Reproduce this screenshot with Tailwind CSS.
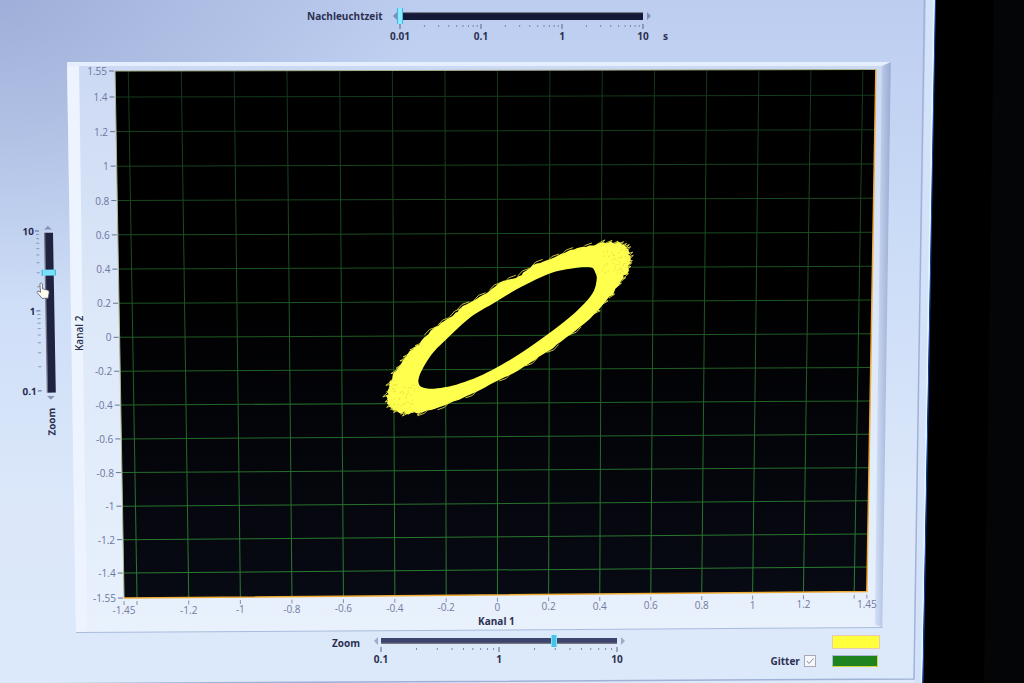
<!DOCTYPE html>
<html lang="de">
<head>
  <meta charset="UTF-8">
  <meta name="viewport" content="width=device-width, initial-scale=1.0">
  <title>XY-Oszilloskop</title>
  <script src="https://cdn.jsdelivr.net/npm/@tailwindcss/browser@4"></script>
</head>
<body class="bg-black font-['Open_Sans',sans-serif] text-[10px] leading-4 text-[#2c3050] overflow-x-hidden">
  <div class="relative isolate min-h-screen">

    <!-- Window frame and monitor edge -->
    <svg class="absolute inset-0 -z-10 size-full" viewBox="0 0 1024 683" preserveAspectRatio="none" aria-hidden="true">
      <defs>
        <linearGradient id="face" x1="0" y1="0" x2="0" y2="1">
          <stop offset="0" stop-color="#bccdf0" />
          <stop offset="0.35" stop-color="#cbdcf7" />
          <stop offset="0.75" stop-color="#dce8fa" />
          <stop offset="1" stop-color="#dce9fa" />
        </linearGradient>
        <radialGradient id="shade" cx="0" cy="0" r="0.45">
          <stop offset="0" stop-color="#8795c4" stop-opacity="0.55" />
          <stop offset="1" stop-color="#8795c4" stop-opacity="0" />
        </radialGradient>
      </defs>
      <rect width="1024" height="683" fill="#000" />
      <path d="M994 0H1024V683H984Z" fill="#040506" />
      <path d="M0 0H935L922 683H0Z" fill="url(#face)" />
      <path d="M0 0H935L922 683H0Z" fill="url(#shade)" />
      <path d="M926 0H935L922 683H915Z" fill="#d3e2f8" />
      <path d="M924.500 0L914 679L0 684" fill="none" stroke="#9fb1d6" stroke-width="1.500" />
      <path d="M934 0L921.500 683" stroke="#e2f6ff" stroke-width="1.500" />
      <path d="M935.500 0L923 683" stroke="#1648b8" stroke-width="1" />
    </svg>

    <div class="w-[87%]">
      <!-- Persistence -->
      <header class="flex h-[60px] items-start gap-2 pt-2 pl-[307px]">
        <label for="persistence" class="w-[78px] font-bold">Nachleuchtzeit</label>
        <div>
          <div class="flex h-4 items-center">
            <svg class="h-2 w-1" viewBox="0 0 4 8" aria-hidden="true"><path d="M4 0V8L0 4Z" fill="#7d8db5" /></svg>
            <input id="persistence" type="range" min="0" max="100" value="0"
              class="h-4 w-[249px] appearance-none bg-transparent bg-linear-to-b from-[#777985] from-10% to-[#151938] to-20% bg-[length:calc(100%-6px)_8px] bg-center bg-no-repeat [&::-webkit-slider-thumb]:h-4 [&::-webkit-slider-thumb]:w-[6px] [&::-webkit-slider-thumb]:appearance-none [&::-webkit-slider-thumb]:border-x [&::-webkit-slider-thumb]:border-[#3fb4e4] [&::-webkit-slider-thumb]:bg-[#8beaff]" />
            <svg class="ml-px h-2 w-1" viewBox="0 0 4 8" aria-hidden="true"><path d="M0 0V8L4 4Z" fill="#7d8db5" /></svg>
          </div>
          <svg class="scale ml-[7px] h-6 w-[243px] overflow-visible" data-labels="0.01,0.1,1,10" data-length="243" viewBox="0 0 243 24"></svg>
        </div>
        <span class="ml-1 pt-5 font-bold">s</span>
      </header>

      <main class="flex">
        <!-- Channel 2 zoom -->
        <aside class="relative w-[66px] shrink-0 -rotate-1 pt-[165px] pl-[18px]">
          <div class="flex">
            <svg class="vscale mt-[6px] h-[160px] w-6 overflow-visible" data-labels="10,1,0.1" data-length="160" viewBox="0 0 24 160"></svg>
            <div class="flex flex-col items-center">
              <svg class="mt-px h-1 w-2" viewBox="0 0 8 4" aria-hidden="true"><path d="M0 4H8L4 0Z" fill="#8a94b4" /></svg>
              <input id="zoomY" type="range" min="0" max="100" value="74.5"
                class="h-[166px] w-[14px] appearance-none bg-transparent bg-linear-to-r from-[#6d7182] from-10% to-[#20233f] to-20% bg-[length:9px_calc(100%-6px)] bg-center bg-no-repeat [direction:rtl] [writing-mode:vertical-lr] [&::-webkit-slider-thumb]:h-[6px] [&::-webkit-slider-thumb]:w-[14px] [&::-webkit-slider-thumb]:appearance-none [&::-webkit-slider-thumb]:border-y [&::-webkit-slider-thumb]:border-[#35a9dd] [&::-webkit-slider-thumb]:bg-[#78e0fb]" />
              <svg class="h-1 w-2" viewBox="0 0 8 4" aria-hidden="true"><path d="M0 0H8L4 4Z" fill="#8a94b4" /></svg>
              <label for="zoomY" class="mt-2 rotate-180 font-bold [writing-mode:vertical-rl]">Zoom</label>
            </div>
          </div>
          <!-- Hand pointer -->
          <svg class="absolute top-[222px] left-[37px] h-[18px] w-[14px]" viewBox="0 0 14 18" aria-hidden="true">
            <path d="M4 2Q5.200 0 6.500 2V7L12 8.500Q13.500 9 13 11.500L12 16.500H6L1 10.500Q1 8.500 3 9.500L4.500 10.500Z" fill="#fffff2" stroke="#555a70" stroke-width="0.800" />
          </svg>
        </aside>

        <svg id="plot" class="min-w-0 flex-1" viewBox="66 60 824 574" role="img" aria-label="Kanal 2 über Kanal 1">
          <defs>
            <linearGradient id="panel" x1="0" y1="0" x2="0" y2="1">
              <stop offset="0" stop-color="#ccd9f3" />
              <stop offset="0.45" stop-color="#dde8f9" />
              <stop offset="1" stop-color="#e8f1fc" />
            </linearGradient>
            <linearGradient id="screen" x1="0" y1="0" x2="0" y2="1">
              <stop offset="0.4" stop-color="#000" />
              <stop offset="1" stop-color="#080a14" />
            </linearGradient>
            <linearGradient id="gridInk" gradientUnits="userSpaceOnUse" x1="0" y1="70" x2="0" y2="598">
              <stop offset="0" stop-color="#12351a" />
              <stop offset="0.5" stop-color="#1d5a22" />
              <stop offset="1" stop-color="#2a7d30" />
            </linearGradient>
            <linearGradient id="bevel" x1="0" y1="0" x2="1" y2="0">
              <stop offset="0" stop-color="#d3e0f6" />
              <stop offset="1" stop-color="#98abd2" />
            </linearGradient>
          </defs>
          <path d="M67 62H890L881.500 627L76 632Z" fill="url(#panel)" />
          <path d="M67 62H79L87 632H76Z" fill="#edf4ff" />
          <path d="M67 62H890L884 66H67Z" fill="#e4eefe" />
          <path d="M881 66L890 62L881.500 627L874 624Z" fill="url(#bevel)" />
          <path d="M76 632L881.500 627" stroke="#a9bcdf" />
          <g id="grid"></g>
          <g id="trace"></g>
          <text x="496" y="624" text-anchor="middle" class="fill-[#2c3050] font-bold">Kanal 1</text>
          <text transform="translate(83 333) rotate(-90)" text-anchor="middle" class="fill-[#2c3050] font-semibold">Kanal 2</text>
        </svg>
      </main>

      <footer class="flex items-start justify-between pl-[332px]">
        <!-- Channel 1 zoom -->
        <div class="flex gap-3">
          <label for="zoomX" class="w-[30px] font-bold">Zoom</label>
          <div>
            <div class="flex h-3 items-center">
              <svg class="h-2 w-1" viewBox="0 0 4 8" aria-hidden="true"><path d="M4 0V8L0 4Z" fill="#9dabc9" /></svg>
              <input id="zoomX" type="range" min="0" max="100" value="73.5" step="0.5"
                class="h-3 w-[242px] appearance-none bg-transparent bg-linear-to-b from-[#3c446e] from-70% to-[#777780] to-90% bg-[length:calc(100%-6px)_6px] bg-center bg-no-repeat [&::-webkit-slider-thumb]:h-3 [&::-webkit-slider-thumb]:w-[6px] [&::-webkit-slider-thumb]:appearance-none [&::-webkit-slider-thumb]:border-x [&::-webkit-slider-thumb]:border-[#7fe0f6] [&::-webkit-slider-thumb]:bg-[#45c4e8]" />
              <svg class="ml-px h-2 w-1" viewBox="0 0 4 8" aria-hidden="true"><path d="M0 0V8L4 4Z" fill="#9dabc9" /></svg>
            </div>
            <svg class="scale ml-[7px] h-6 w-[236px] overflow-visible" data-labels="0.1,1,10" data-length="236" viewBox="0 0 236 24"></svg>
          </div>
        </div>
        <!-- Colours -->
        <div class="grid grid-cols-[auto_48px] items-center gap-x-4 gap-y-1 pr-[11px]">
          <span></span>
          <button type="button" aria-label="Farbe der Spur" class="h-[14px] border border-[#e9c8b4] bg-[#ffff3c]"></button>
          <div class="flex items-center gap-1">
            <label for="gitter" class="font-bold">Gitter</label>
            <input id="gitter" type="checkbox" checked class="peer size-3 appearance-none border border-[#a9aab5] bg-[#f4f7fb]" />
            <svg class="pointer-events-none -ml-4 hidden size-3 peer-checked:block" viewBox="0 0 12 12" aria-hidden="true"><path d="M3 6L5 8.500L9.500 3.500" fill="none" stroke="#8e9098" /></svg>
          </div>
          <button type="button" aria-label="Farbe des Gitters" class="h-3 w-[46px] border border-[#a8bad6] border-r-[#cfd83c] border-b-[#cfd83c] bg-[#1f831f]"></button>
        </div>
      </footer>
    </div>
  </div>

  <script>
    // logarithmic tick offsets from 0 to length
    function logTicks(decades, length) {
      const ticks = [];
      for (let d = 0; d < decades; d++) {
        for (let n = 1; n < 10; n++) {
          ticks.push({ at: (d + Math.log10(n)) / decades * length, major: n === 1 });
        }
      }
      ticks.push({ at: length, major: true });
      return ticks;
    }

    document.querySelectorAll('.scale').forEach(function (svg) {
      const labels = svg.dataset.labels.split(',');
      const length = +svg.dataset.length;
      let out = '';
      logTicks(labels.length - 1, length).forEach(t => {
        out += `<path d="M${t.at} ${t.major ? 0 : 1}V${t.major ? 5 : 3}" stroke="${t.major ? '#5b658c' : '#7c88ad'}"/>`;
      });
      labels.forEach((label, i) => {
        out += `<text x="${i * length / (labels.length - 1)}" y="16" text-anchor="middle" class="fill-[#2c3050] font-bold">${label}</text>`;
      });
      svg.innerHTML = out;
    });

    document.querySelectorAll('.vscale').forEach(function (svg) {
      const labels = svg.dataset.labels.split(',');
      const length = +svg.dataset.length;
      let out = '';
      logTicks(labels.length - 1, length).forEach(t => {
        out += `<path d="M${t.major ? 19 : 20} ${length - t.at}H23" stroke="${t.major ? '#5b658c' : '#8b96b8'}"/>`;
      });
      labels.forEach((label, i) => {
        out += `<text x="18" y="${i * length / (labels.length - 1) + 4}" text-anchor="end" class="fill-[#2c3050] font-bold">${label}</text>`;
      });
      svg.innerHTML = out;
    });

    // curve through [low, mid, high] for u in -1..1
    const bend = (u, [low, mid, high]) => mid + u * (high - low) / 2 + u * u * ((high + low) / 2 - mid);
    const topX = v => bend(v / 1.45, [115, 497, 875]);
    const bottomX = v => bend(v / 1.45, [124, 497, 866]);
    const leftY = v => bend(v / 1.55, [597.5, 337, 71]);
    const rightY = v => bend(v / 1.55, [591, 333.5, 69.5]);

    const xs = [-1.4, -1.2, -1, -0.8, -0.6, -0.4, -0.2, 0, 0.2, 0.4, 0.6, 0.8, 1, 1.2, 1.4];
    let grid = '<path d="M115 71L875 69.5L866 591L124 597.5Z" fill="url(#screen)"/>';
    xs.forEach(v => {
      grid += `<path d="M${topX(v)} 71L${bottomX(v)} ${597.5 - (bottomX(v) - 124) * 6.5 / 742}" stroke="url(#gridInk)"/>`;
      const edge = y => 115 + (y - 71) * 9 / 527;
      grid += `<path d="M${edge(leftY(v))} ${leftY(v)}L${875 - (rightY(v) - 69.5) * 9 / 522} ${rightY(v)}" stroke="url(#gridInk)"/>`;
    });
    grid += '<path d="M124 597.5L115 71L875 69.5" fill="none" stroke="#aab58f"/>';
    grid += '<path d="M124 597.5L866 591L875 69.5" fill="none" stroke="#f0ab35" stroke-width="1.5"/>';

    [-1.45, ...xs, 1.45].forEach(v => {
      const x = bottomX(v);
      const y = 597.5 - (x - 124) * 6.5 / 742;
      grid += `<path d="M${x} ${y + 3}v4" stroke="#8b90aa"/>`;
      if (Math.abs(v) !== 1.4) {
        grid += `<text x="${x}" y="${y + 16}" text-anchor="middle" class="fill-[#747a9e]">${v}</text>`;
      }
    });
    [-1.55, ...xs, 1.55].forEach(v => {
      const y = leftY(v);
      const x = 115 + (y - 71) * 9 / 527;
      grid += `<path d="M${x - 6} ${y}h5" stroke="#6a7296"/>`;
      grid += `<text x="${x - 8}" y="${y + 4}" text-anchor="end" class="fill-[#6d75a0]">${v}</text>`;
    });
    document.getElementById('grid').innerHTML = grid;

    // Lissajous trace: band between two closed outlines
    const outer = [[616, 242], [625, 247], [629, 256], [628, 268], [618, 285], [597, 311], [570, 334], [543, 354], [517, 370], [477, 391], [443, 405], [420, 412], [400, 412], [388, 405], [387, 390], [394, 373], [407, 355], [423, 338], [438, 325], [454, 314], [463, 306], [483, 295], [500, 282], [518, 276], [533, 265], [552, 258], [570, 250], [593, 245]];
    const inner = [[590, 267], [595, 273], [596, 280], [592, 293], [577, 310], [550, 332], [517, 355], [487, 372], [460, 383], [437, 388], [422, 387], [418, 380], [423, 367], [433, 352], [447, 338], [470, 317], [493, 303], [520, 287], [550, 273], [573, 268]];

    let seed = 7;
    const rand = () => (seed = (seed * 16807) % 2147483647) / 2147483647;

    function smooth(points, steps) {
      const out = [];
      points.forEach((p1, i) => {
        const n = points.length;
        const p0 = points[(i + n - 1) % n], p2 = points[(i + 1) % n], p3 = points[(i + 2) % n];
        for (let s = 0; s < steps; s++) {
          const t = s / steps;
          out.push([0, 1].map(k => 0.5 * (2 * p1[k] + (p2[k] - p0[k]) * t
            + (2 * p0[k] - 5 * p1[k] + 4 * p2[k] - p3[k]) * t * t
            + (3 * p1[k] - p0[k] - 3 * p2[k] + p3[k]) * t * t * t)));
        }
      });
      return out;
    }
    const toPath = pts => 'M' + pts.map(p => p[0].toFixed(1) + ' ' + p[1].toFixed(1)).join('L') + 'Z';

    const rim = smooth(outer, 6).map(([x, y]) => {
      const tip = Math.abs(x - 508) > 90 ? 3 : 1;
      return [x + (rand() - 0.5) * tip, y + (rand() - 0.5) * tip];
    });
    let trace = `<path d="${toPath(rim)}${toPath(smooth(inner, 6))}" fill="#ffff4e" fill-rule="evenodd"/>`;
    // stray sweeps that stick out of the band, pointing away from its centre
    rim.forEach(([x, y], i) => {
      const end = Math.abs(x - 508) > 88;
      if (i % (end ? 2 : 5)) return;
      if (end) {
        const far = Math.hypot(x - 508, y - 328);
        const ux = (x - 508) / far, uy = (y - 328) / far;
        const reach = 1 + rand() * 3;
        trace += `<path d="M${x - ux * 5 - uy * 2} ${y - uy * 5 + ux * 2}L${x + ux * reach} ${y + uy * reach}L${x - ux * 5 + uy * 2} ${y - uy * 5 - ux * 2}" fill="none" stroke="#f8f450" stroke-width="0.8"/>`;
      } else {
        const up = y < 328 - (x - 508) * 0.68 ? -1 : 1;
        trace += `<path d="M${x - 6} ${y + 4}L${x + up} ${y + up * 1.5}L${x + 6} ${y - 4}" fill="none" stroke="#f0ec4a" stroke-width="0.8"/>`;
      }
    });
    // gaps between sweeps at both turning points
    for (let i = 0; i < 90; i++) {
      const right = i % 2;
      const x = right ? 601 + rand() * 24 : 391 + rand() * 23;
      const y = right ? 250 + rand() * 24 : 384 + rand() * 24;
      trace += `<path d="M${x} ${y}l1.500 -0.800" stroke="#d0c838" stroke-width="0.500"/>`;
    }
    document.getElementById('trace').innerHTML = trace;
  </script>
</body>
</html>
